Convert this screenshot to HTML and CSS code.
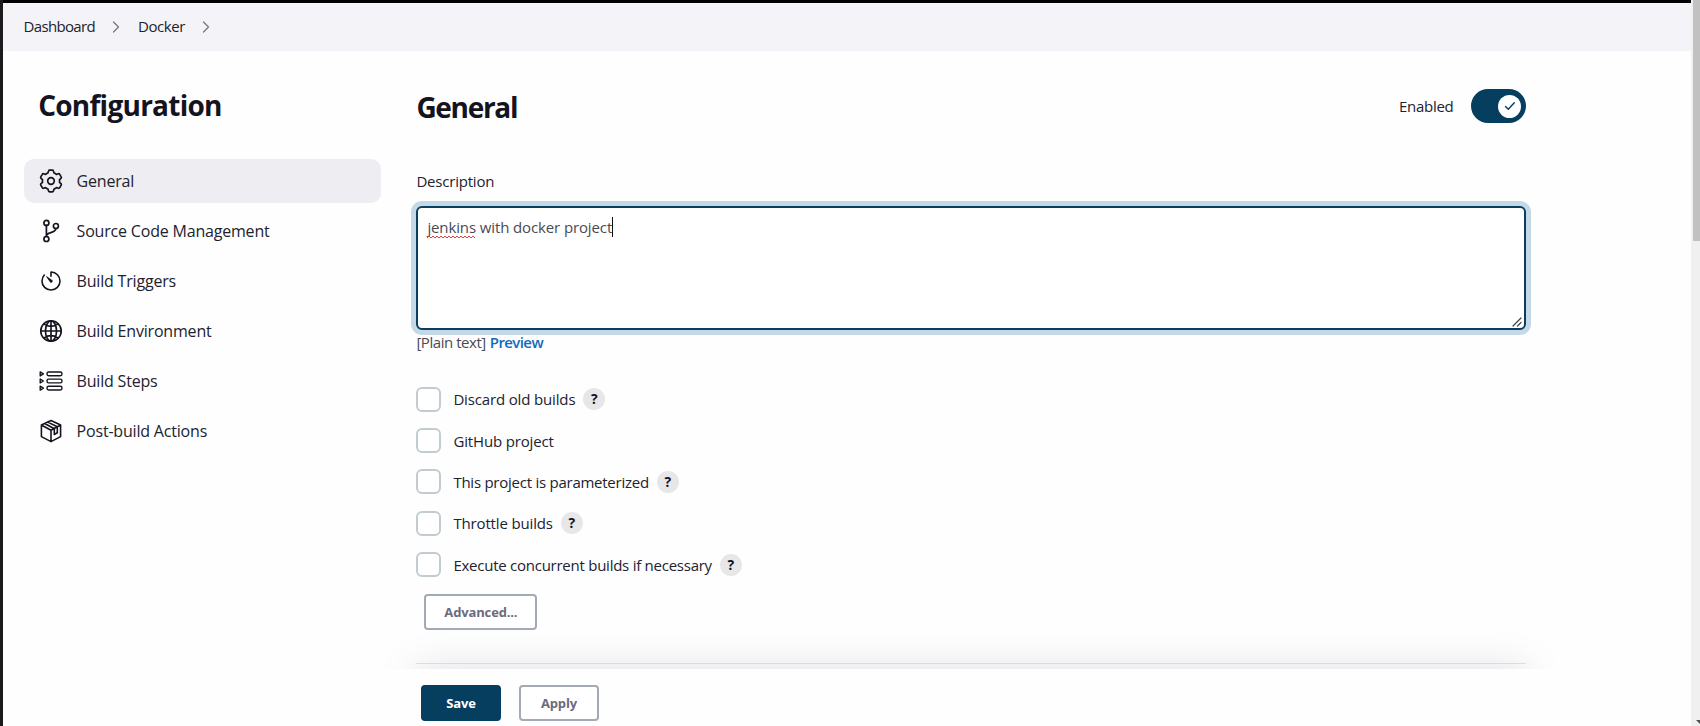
FILE: index.html
```html
<!DOCTYPE html>
<html lang="en">
<head>
<meta charset="utf-8">
<title>Docker Config [Jenkins]</title>
<link rel="stylesheet" href="styles.css">
</head>
<body>
<div class="window">
  <div class="page">
    <nav class="breadcrumbs">
      <a class="crumb crumb-dashboard">Dashboard</a>
      <svg class="chevron" viewBox="0 0 8 12"><path d="M1.5 1l5 5-5 5"/></svg>
      <a class="crumb crumb-job">Docker</a>
      <svg class="chevron" viewBox="0 0 8 12"><path d="M1.5 1l5 5-5 5"/></svg>
    </nav>
    <div class="columns">
      <aside class="sidebar">
        <h1 class="title title-side">Configuration</h1>
        <div class="tasks">
          <a class="task active">
            <svg class="icon" viewBox="-12 -12 24 24"><path stroke-width="1.7" d="M-2.43-10Q-2.2-10.8-1.4-10.8H1.4Q2.2-10.8 2.43-10L3.08-8.03Q4.3-7.6 5.41-6.68L7.5-7.3Q8.3-7.5 8.7-6.7L10.2-4.1Q10.7-3.3 10-2.7L8.49-1.35Q8.7 0 8.49 1.35L10 2.7Q10.7 3.3 10.2 4.1L8.7 6.7Q8.3 7.5 7.5 7.3L5.41 6.68Q4.3 7.6 3.08 8.03L2.43 10Q2.2 10.8 1.4 10.8H-1.4Q-2.2 10.8-2.43 10L-3.08 8.03Q-4.3 7.6-5.41 6.68L-7.5 7.3Q-8.3 7.5-8.7 6.7L-10.2 4.1Q-10.7 3.3-10 2.7L-8.49 1.35Q-8.7 0-8.49-1.35L-10-2.7Q-10.7-3.3-10.2-4.1L-8.7-6.7Q-8.3-7.5-7.5-7.3L-5.41-6.68Q-4.3-7.6-3.08-8.03Z"/><circle r="3.3" stroke-width="1.7"/></svg>
            <span>General</span>
          </a>
          <a class="task">
            <svg class="icon" viewBox="0 0 24 24"><g stroke-width="1.7"><circle cx="7.4" cy="3.9" r="2.5"/><circle cx="16.9" cy="7" r="2.5"/><circle cx="7.4" cy="20" r="2.5"/><path d="M7.4 6.4v11.1M16.9 9.5c0 5-9.5 3.2-9.5 7.5"/></g></svg>
            <span>Source Code Management</span>
          </a>
          <a class="task">
            <svg class="icon" viewBox="0 0 512 512"><path stroke-width="34" d="M112.91 128A191.85 191.85 0 0064 254c-1.18 106.35 85.65 193.8 192 194 106.2.2 192-85.83 192-192 0-104.54-83.55-189.61-187.5-192a4.36 4.36 0 00-4.5 4.37V152"/><path class="solid" d="M233.38 278.63l-79-113a8.13 8.13 0 0111.32-11.32l113 79a32.5 32.5 0 01-37.25 53.26 33.21 33.21 0 01-8.07-7.94z"/></svg>
            <span>Build Triggers</span>
          </a>
          <a class="task">
            <svg class="icon" viewBox="12 12 488 488"><g stroke-width="34"><circle cx="256" cy="256" r="208"/><path d="M256 48c-58.07 0-112.67 93.13-112.67 208S197.93 464 256 464s112.67-93.13 112.67-208S314.07 48 256 48zM117.33 117.33c38.24 27.15 86.38 43.34 138.67 43.34s100.43-16.19 138.67-43.34M394.67 394.67c-38.24-27.15-86.38-43.34-138.67-43.34s-100.43 16.19-138.67 43.34M256 48v416M464 256H48"/></g></svg>
            <span>Build Environment</span>
          </a>
          <a class="task">
            <svg class="icon" viewBox="0 0 24 24"><g stroke-width="1.4"><path d="M1.200 2.900l3.200 2-3.200 2zM1.200 10l3.200 2-3.200 2zM1.200 17.100l3.200 2-3.200 2z"/><rect x="8" y="3" width="15" height="3.800" rx="1.700"/><rect x="8" y="10.100" width="15" height="3.800" rx="1.700"/><rect x="8" y="17.200" width="15" height="3.800" rx="1.700"/></g></svg>
            <span>Build Steps</span>
          </a>
          <a class="task">
            <svg class="icon" viewBox="0 0 24 24"><path stroke-width="1.6" d="M12 1.600L21.600 6v11.600L12 22.600 2.400 17.600V6zM2.400 6L12 11.200 21.600 6M12 11.200v11.400M5.700 4.500l9.600 5.300v5.700l3-1.700V7.800L8.800 3.100"/></svg>
            <span>Post-build Actions</span>
          </a>
        </div>
      </aside>
      <main class="main">
        <div class="section-head">
          <h2 class="title title-main">General</h2>
          <div class="enable">
            <span class="enable-label">Enabled</span>
            <span class="toggle"><span class="knob"><svg class="check" viewBox="0 0 12 10"><path d="M1.500 5.400l2.800 2.800 6-6.500"/></svg></span></span>
          </div>
        </div>
        <div class="label">Description</div>
        <div class="textarea">
          <span class="typed"><span class="misspelt">jenkins<svg class="squiggle" viewBox="0 0 48 4"><path d="M0 3l2-2 2 2 2-2 2 2 2-2 2 2 2-2 2 2 2-2 2 2 2-2 2 2 2-2 2 2 2-2 2 2 2-2 2 2 2-2 2 2 2-2 2 2 2-2 2 2"/></svg></span> with docker project</span><span class="caret"></span>
          <svg class="grip" viewBox="0 0 10 10"><path d="M1 9l8-8M5.500 9L9 5.500"/></svg>
        </div>
        <div class="format"><span class="plain">[Plain text]</span><a class="preview">Preview</a></div>
        <div class="options">
          <div class="option"><span class="box"></span><span class="name">Discard old builds</span><span class="help">?</span></div>
          <div class="option"><span class="box"></span><span class="name">GitHub project</span></div>
          <div class="option"><span class="box"></span><span class="name name-tight">This project is parameterized</span><span class="help">?</span></div>
          <div class="option"><span class="box"></span><span class="name">Throttle builds</span><span class="help">?</span></div>
          <div class="option"><span class="box"></span><span class="name name-tight">Execute concurrent builds if necessary</span><span class="help">?</span></div>
        </div>
        <span class="button advanced">Advanced...</span>
        <div class="divider"></div>
        <div class="dock">
          <div class="dock-inner">
            <span class="button primary">Save</span>
            <span class="button">Apply</span>
          </div>
        </div>
      </main>
    </div>
  </div>
  <div class="scrollbar"><div class="thumb"></div><div class="arrow"></div></div>
</div>
</body>
</html>
```

FILE: styles.css
```css
* { box-sizing: border-box; }
body { margin: 0; background: #fefefe; color: #22222e; font: 500 15px/24px "Open Sans", "Noto Sans", sans-serif; }
svg { fill: none; stroke: currentColor; stroke-linecap: round; stroke-linejoin: round; flex: none; }
.window { display: flex; width: 1700px; height: 726px; overflow: hidden; }
.page { width: 1691px; border-left: 3px solid #1b1b1d; overflow: hidden; }
.breadcrumbs { display: flex; align-items: center; height: 51px; padding: 0 0 1px 20.5px; border-top: 3px solid #000; background: #f4f4f8; }
.crumb { margin-top: -2px; white-space: nowrap; }
.crumb-dashboard { width: 71px; letter-spacing: -0.65px; }
.crumb-job { width: 46px; margin-left: 18px; letter-spacing: -0.45px; }
.chevron { width: 8px; height: 12px; margin-left: 17.5px; color: #777783; stroke-width: 1.3; }
.columns { display: flex; gap: 35px; padding-left: 21.4px; }
.sidebar { width: 357px; padding-top: 34px; }
.title { margin: 0; color: #14141f; font-size: 28px; font-weight: 700; line-height: 40px; }
.title-side { padding-left: 13.8px; letter-spacing: -0.75px; }
.title-main { margin-top: 2px; letter-spacing: -1.3px; }
.tasks { display: flex; flex-direction: column; gap: 6px; margin-top: 33.6px; }
.task { display: flex; align-items: center; gap: 13.6px; height: 44.15px; padding-left: 14.6px; border-radius: 10px; font-size: 16px; letter-spacing: -0.19px; }
.active { background: #ededf2; }
.icon { width: 24px; height: 24px; color: #14141f; }
.solid { fill: currentColor; stroke: none; }
.main { width: 1110px; padding-top: 35px; }
.section-head, .enable { display: flex; align-items: center; }
.section-head { justify-content: space-between; height: 40px; }
.enable { gap: 18px; }
.enable-label { letter-spacing: -0.3px; }
.toggle { display: flex; align-items: center; justify-content: flex-end; width: 55px; height: 34px; padding-right: 5px; border-radius: 17px; background: #063e60; }
.knob { display: flex; align-items: center; justify-content: center; width: 23px; height: 23px; border-radius: 50%; background: #fff; }
.check { width: 12px; height: 10px; color: #063e60; stroke-width: 1.4; }
.label { margin-top: 43px; letter-spacing: -0.2px; }
.textarea { position: relative; display: flex; height: 124.5px; margin-top: 12.7px; padding: 7px 9px; border: 2px solid #0b3e5e; border-radius: 6px; background: #fff; box-shadow: 0 0 0 5px #c3d9e7; }
.typed { height: 24px; color: #4a4a54; font-weight: 400; letter-spacing: -0.12px; white-space: pre; }
.misspelt { position: relative; }
.squiggle { position: absolute; left: 0; bottom: -2px; width: 48px; height: 4px; color: #e2403c; stroke-width: 1; }
.caret { width: 1px; height: 20px; margin-top: 2px; background: #111; }
.grip { position: absolute; right: 2px; bottom: 1px; width: 10px; height: 10px; color: #444; stroke-width: 1.2; }
.format { display: flex; gap: 4px; }
.plain { color: #4a4a54; font-weight: 400; letter-spacing: -0.45px; }
.preview { color: #1269c0; font-weight: 600; letter-spacing: -0.6px; }
.options { display: flex; flex-direction: column; gap: 16.4px; margin-top: 32.5px; }
.option { display: flex; align-items: center; height: 25px; }
.box { width: 25px; height: 25px; margin-right: 12px; border: 2px solid #c2cbd0; border-radius: 6px; background: #fff; }
.name { letter-spacing: -0.15px; }
.name-tight { letter-spacing: -0.25px; }
.help { width: 22px; height: 22px; margin-left: 8px; border-radius: 50%; background: #e7e7e9; color: #14141f; font-size: 14px; font-weight: 700; line-height: 22px; text-align: center; }
.button { display: flex; align-items: center; justify-content: center; width: 80px; height: 36px; border: 2px solid #a3aab4; border-radius: 4px; background: #fff; color: #6b6b80; font-size: 13px; font-weight: 700; letter-spacing: -0.15px; }
.advanced { width: 113px; margin: 17px 0 0 8px; }
.primary { border-color: #063e60; background: #063e60; color: #fff; }
.divider { height: 1px; margin-top: 33px; background: #e4e4ea; }
.dock { position: relative; height: 60px; margin-top: 5px; box-shadow: 0 0 44px rgba(20, 20, 60, 0.12); }
.dock-inner { display: flex; gap: 18px; width: 1210px; height: 60px; margin-left: -50px; padding: 16px 0 0 54.6px; background: #fefefe; }
.scrollbar { position: relative; width: 9px; padding-left: 2px; background: #f0f0f0; }
.thumb { height: 241px; background: #c1c1c1; }
.arrow { position: absolute; right: 0; bottom: 2px; width: 4px; height: 4px; background: #505050; clip-path: polygon(0 0, 100% 0, 100% 100%); }
```
